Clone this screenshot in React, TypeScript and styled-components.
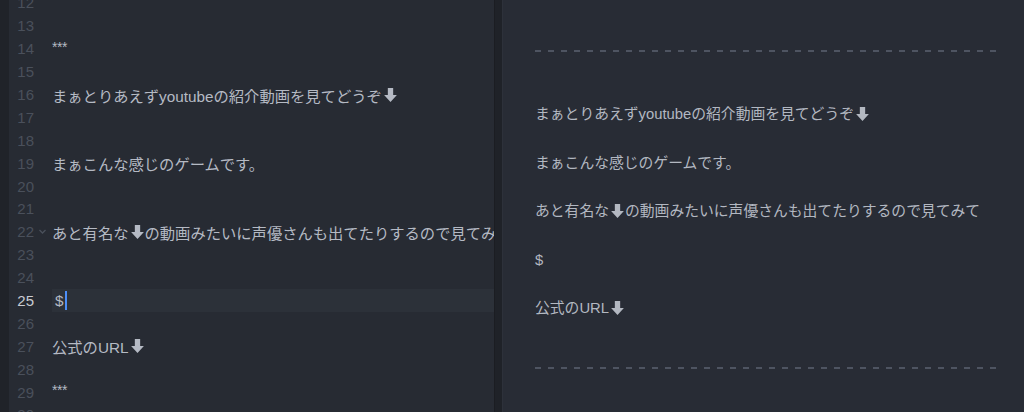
import React from "react";
import styled, { createGlobalStyle } from "styled-components";

const GlobalStyle = createGlobalStyle`
  html, body {
    margin: 0;
    padding: 0;
    background: #272b33;
    overflow: hidden;
  }
`;

const FONT = `"Liberation Sans", "Noto Sans CJK JP", sans-serif`;
const LINE_H = 22.9;

const Window = styled.div`
  display: flex;
  width: 1024px;
  height: 412px;
  overflow: hidden;
  background: #272b33;
  font-family: ${FONT};
`;

const LeftStrip = styled.div`
  width: 9px;
  flex: none;
  background: #202329;
`;

const Editor = styled.div`
  width: 485px;
  flex: none;
  background: #272b33;
  overflow: hidden;
`;

const Lines = styled.div`
  margin-top: -8.5px;
`;

const Line = styled.div`
  display: flex;
  height: ${LINE_H}px;
  align-items: center;
`;

const Gutter = styled.div<{ $active?: boolean }>`
  width: 43px;
  flex: none;
  display: flex;
  align-items: center;
  height: 100%;
  position: relative;
  font-size: 15px;
  color: ${(p) => (p.$active ? "#c9ccd3" : "#4a505b")};
`;

const Num = styled.span`
  width: 25px;
  text-align: right;
`;

const Fold = styled.span`
  position: absolute;
  left: 29px;
  top: 8px;
  display: flex;
`;

const Code = styled.div<{ $active?: boolean }>`
  flex: 1;
  min-width: 0;
  height: 100%;
  display: flex;
  align-items: center;
  white-space: nowrap;
  overflow: hidden;
  font-size: 15.3px;
  color: #b5bac4;
  background: ${(p) => (p.$active ? "#2c3139" : "transparent")};
`;

const Stars = styled.span`
  font-size: 14px;
  letter-spacing: -0.5px;
  position: relative;
  top: -2px;
`;

const Cursor = styled.span`
  display: inline-block;
  width: 2px;
  height: 19px;
  margin-left: 1px;
  background: #4d8ef8;
`;

const Dollar = styled.span`
  padding-left: 3px;
`;

const Divider = styled.div`
  width: 9px;
  flex: none;
  background: #1f2228;
  border-left: 1px solid #1b1d22;
  border-right: 1px solid #2d313a;
  box-sizing: border-box;
`;

const Preview = styled.div`
  flex: 1;
  background: #282c35;
  padding: 50px 27px 0 32px;
  display: flex;
  flex-direction: column;
`;

const Rule = styled.div`
  height: 2px;
  background: repeating-linear-gradient(
    to right,
    #4e5461 0 6px,
    transparent 6px 13px
  );
`;

const Paras = styled.div`
  display: flex;
  flex-direction: column;
  gap: 24.5px;
  padding: 50px 0 47px;
`;

const Para = styled.p`
  margin: 0;
  height: 24px;
  line-height: 24px;
  font-size: 14.8px;
  color: #b3b8c1;
  white-space: nowrap;
  display: flex;
  align-items: center;
`;

const ArrowSvg = styled.svg`
  flex: none;
  margin-left: 1px;
`;

const Arrow = () => (
  <ArrowSvg width="15" height="16" viewBox="0 0 14 15">
    <path d="M4.5 1h5v6.5h3.5L7 14 1 7.5h3.5z" fill="currentColor" />
  </ArrowSvg>
);

const Chevron = () => (
  <svg width="9" height="7" viewBox="0 0 9 7">
    <path d="M1.5 2l3 3 3-3" stroke="#4a505b" strokeWidth="1.3" fill="none" />
  </svg>
);

type Row = { n: number; content?: React.ReactNode; fold?: boolean; active?: boolean };

const rows: Row[] = [
  { n: 12 },
  { n: 13 },
  { n: 14, content: <Stars>***</Stars> },
  { n: 15 },
  { n: 16, content: <>まぁとりあえずyoutubeの紹介動画を見てどうぞ<Arrow /></> },
  { n: 17 },
  { n: 18 },
  { n: 19, content: "まぁこんな感じのゲームです。" },
  { n: 20 },
  { n: 21 },
  {
    n: 22,
    fold: true,
    content: <>あと有名な<Arrow />の動画みたいに声優さんも出てたりするので見てみて</>,
  },
  { n: 23 },
  { n: 24 },
  { n: 25, active: true, content: <><Dollar>$</Dollar><Cursor /></> },
  { n: 26 },
  { n: 27, content: <>公式のURL<Arrow /></> },
  { n: 28 },
  { n: 29, content: <Stars>***</Stars> },
  { n: 30 },
];

export default function App() {
  return (
    <>
      <GlobalStyle />
      <Window>
        <LeftStrip />
        <Editor>
          <Lines>
            {rows.map((r) => (
              <Line key={r.n}>
                <Gutter $active={r.active}>
                  <Num>{r.n}</Num>
                  {r.fold && (
                    <Fold>
                      <Chevron />
                    </Fold>
                  )}
                </Gutter>
                <Code $active={r.active}>{r.content}</Code>
              </Line>
            ))}
          </Lines>
        </Editor>
        <Divider />
        <Preview>
          <Rule />
          <Paras>
            <Para>まぁとりあえずyoutubeの紹介動画を見てどうぞ<Arrow /></Para>
            <Para>まぁこんな感じのゲームです。</Para>
            <Para>あと有名な<Arrow />の動画みたいに声優さんも出てたりするので見てみて</Para>
            <Para>$</Para>
            <Para>公式のURL<Arrow /></Para>
          </Paras>
          <Rule />
        </Preview>
      </Window>
    </>
  );
}
